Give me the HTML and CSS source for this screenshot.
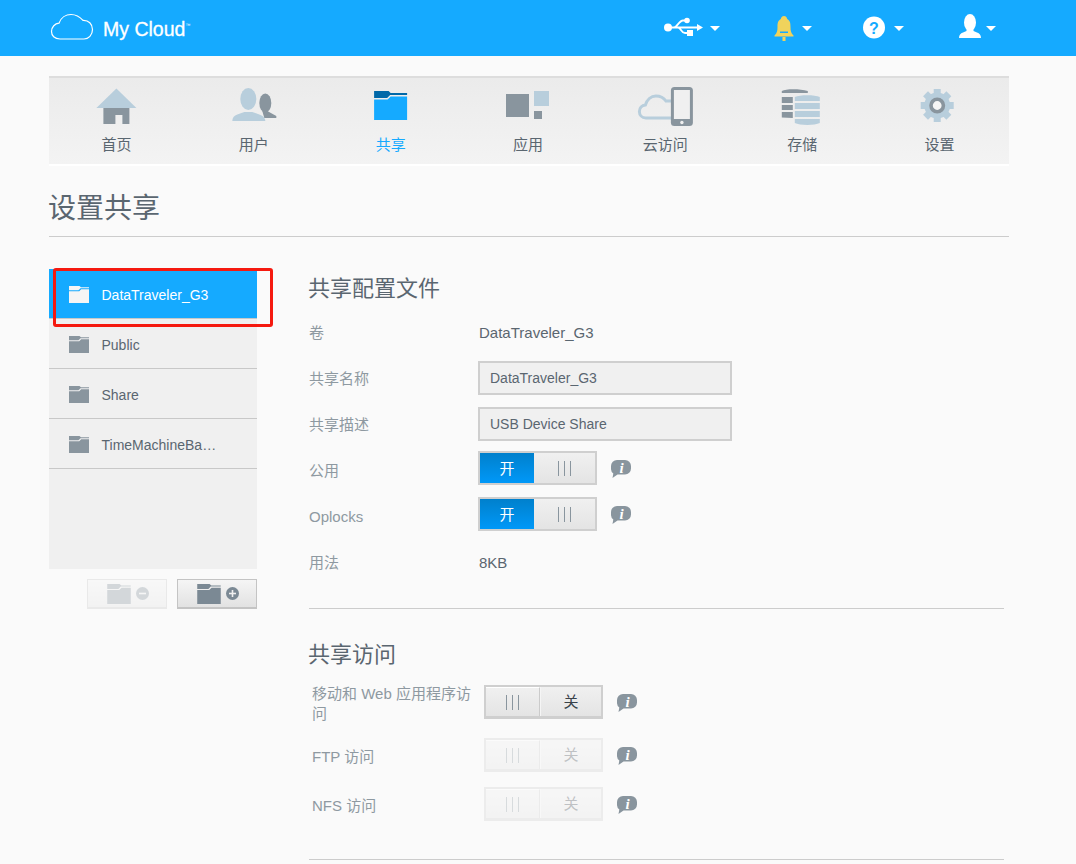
FILE: index.html
```html
<!DOCTYPE html>
<html lang="zh">
<head>
<meta charset="utf-8">
<title>My Cloud</title>
<link rel="stylesheet" href="styles.css">
</head>
<body>
<svg class="defs" width="0" height="0">
  <symbol id="folder" viewBox="0 0 20 17">
    <path d="M0 0h10.500l1.500 1.200h8v1h-8.500l-2 2H0z"/>
    <path d="M0 5.200h10.200l2-2H20V17H0z"/>
  </symbol>
  <symbol id="info" viewBox="0 0 20 18">
    <path d="M6 0h8a6 6 0 0 1 6 6v2.500a6 6 0 0 1-6 6H6.500L1.500 18l.8-4.500A6 6 0 0 1 0 8.500V6a6 6 0 0 1 6-6z"/>
  </symbol>
</svg>

<header class="topbar">
  <div class="logo">
    <svg class="logo-cloud" width="44" height="28" viewBox="50 13 44 28"><path d="M60 39C54.500 39 51.500 35.500 51.500 31.500 51.500 27 55 23.500 59 23.200 61 17.500 66 14.500 71 14.500 76.500 14.500 80.500 17.500 83 20.300 88.500 20 92.500 24 92.500 29.500 92.500 35 88.500 39 84 39Z"/></svg>
    <span class="logo-text">My Cloud<sup class="tm">™</sup></span>
  </div>
  <div class="top-actions">
    <div class="top-item">
      <svg width="50" height="28" viewBox="660 14 50 28" class="white">
        <circle cx="668" cy="27.500" r="4"/>
        <path class="usb-line" d="M668 27.500H699M674 27.500c3 0 5-7 9-7h2M678 27.500c3 0 3 5.500 7 5.500h2"/>
        <circle cx="687" cy="20.500" r="2.800"/>
        <rect x="687" y="30" width="6" height="6"/>
        <path d="M697 24l6 3.500-6 3.500z"/>
      </svg>
      <span class="caret"></span>
    </div>
    <div class="top-item">
      <svg width="32" height="28" viewBox="770 12 32 28" class="bell">
        <path d="M784 14c2 0 3 1.500 3.200 3 3 1.500 3.300 4.500 3.300 8 0 4 .5 6 3 8.500v1h-19v-1c2.500-2.500 3-4.500 3-8.500 0-3.500.3-6.500 3.300-8 .2-1.500 1.200-3 3.200-3z"/>
        <rect x="782.500" y="35" width="3" height="4"/>
        <rect x="780" y="29.500" width="8" height="1.500" class="bell-mark"/>
      </svg>
      <span class="caret"></span>
    </div>
    <div class="top-item">
      <svg width="34" height="28" viewBox="860 14 34 28" class="white">
        <circle cx="874" cy="27.500" r="11"/>
        <text x="874" y="33.500" class="help-mark">?</text>
      </svg>
      <span class="caret"></span>
    </div>
    <div class="top-item">
      <svg width="31" height="28" viewBox="955 14 31 28" class="white">
        <ellipse cx="970" cy="22.500" rx="6" ry="8.500"/>
        <path d="M959 38c0-3 1.500-4.500 4-5.500l3.500-1.500V27h7v4l3.500 1.500c2.500 1 4 2.500 4 5.500z"/>
      </svg>
      <span class="caret"></span>
    </div>
  </div>
</header>

<div class="page">
  <nav class="mainnav">
    <a class="nav-item">
      <svg width="60" height="44" viewBox="87.600 84 60 44">
        <path class="lt" d="M116 88.500l20 19.500H96z"/>
        <path class="dk" d="M103 108h26v16h-7v-9h-7v9h-12z"/>
      </svg>
      <span>首页</span>
    </a>
    <a class="nav-item">
      <svg width="60" height="44" viewBox="224.700 84 60 44">
        <ellipse class="dk" cx="265" cy="103" rx="6" ry="9.500"/>
        <path class="dk" d="M262 111h5l9 5v2h-12z"/>
        <ellipse class="lt" cx="248" cy="99" rx="8" ry="11"/>
        <path class="lt" d="M232 121c0-3.500 2-5.500 5-6.500l7-2.500h8l7 2.500c3 1 6 3 6 6.500z"/>
      </svg>
      <span>用户</span>
    </a>
    <a class="nav-item active">
      <svg width="60" height="44" viewBox="361.900 84 60 44">
        <path class="fd" d="M374 91h14.500l2 2H407v2h-17l-3 3h-13z"/>
        <path class="fb" d="M374 99.500h13.500l3-3H407V120h-33z"/>
      </svg>
      <span>共享</span>
    </a>
    <a class="nav-item">
      <svg width="60" height="44" viewBox="499 84 60 44">
        <rect class="dk" x="506" y="94" width="23" height="23"/>
        <rect class="lt" x="534" y="91" width="15" height="15"/>
        <rect class="dk" x="534" y="111" width="8" height="8"/>
      </svg>
      <span>应用</span>
    </a>
    <a class="nav-item">
      <svg width="60" height="44" viewBox="636.100 84 60 44">
        <path class="cloud-line" d="M672 118h-26c-4 0-6.500-3-6.500-6.500s2.500-6 6-6.500c1.500-5 5.500-9 10.500-9 4.500 0 8 2 10 5h6"/>
        <rect class="dk" x="671" y="87" width="22" height="39" rx="3.500"/>
        <rect class="screen" x="674" y="90" width="16" height="29"/>
        <circle class="screen" cx="682" cy="122.500" r="1.700"/>
      </svg>
      <span>云访问</span>
    </a>
    <a class="nav-item">
      <svg width="60" height="44" viewBox="773.200 84 60 44">
        <path class="dk" d="M782 91c4-2.500 18-2.500 26 0v2h-26zM782 97h11v6h-11zM782 105h11v5h-11zM782 112h11v6l-11-.500c0 0 0 0 0-5.500z"/>
        <path class="lt" d="M795 97c5-2.500 20-2.500 25 0v4h-25zM795 103h25v6h-25zM795 111h25v6h-25zM795 119h25v4c-5 2.500-20 2.500-25 0z"/>
      </svg>
      <span>存储</span>
    </a>
    <a class="nav-item">
      <svg width="60" height="44" viewBox="910.300 84 60 44">
        <g class="lt">
          <circle cx="937.500" cy="105.500" r="13"/>
          <rect x="934" y="89" width="7" height="33"/>
          <rect x="921" y="102" width="33" height="7"/>
          <rect x="934" y="89" width="7" height="33" transform="rotate(45 937.500 105.500)"/>
          <rect x="934" y="89" width="7" height="33" transform="rotate(-45 937.500 105.500)"/>
        </g>
        <circle class="gear-ring" cx="937.500" cy="105.500" r="6.200"/>
      </svg>
      <span>设置</span>
    </a>
  </nav>

  <h1 class="page-title">设置共享</h1>

  <div class="content">
    <aside class="sidebar">
      <ul class="share-list">
        <li class="share selected"><svg class="folder-ico" width="20" height="17"><use href="#folder"/></svg><span class="share-name">DataTraveler_G3</span></li>
        <li class="share"><svg class="folder-ico" width="20" height="17"><use href="#folder"/></svg><span class="share-name">Public</span></li>
        <li class="share"><svg class="folder-ico" width="20" height="17"><use href="#folder"/></svg><span class="share-name">Share</span></li>
        <li class="share"><svg class="folder-ico" width="20" height="17"><use href="#folder"/></svg><span class="share-name">TimeMachineBa…</span></li>
      </ul>
      <div class="highlight"></div>
      <div class="share-buttons">
        <button class="fbtn disabled" type="button">
          <svg width="24" height="20"><use href="#folder"/></svg>
          <span class="fbtn-badge">
            <svg width="13" height="13" viewBox="0 0 13 13"><circle cx="6.500" cy="6.500" r="6.500"/><rect class="badge-mark" x="3" y="5.700" width="7" height="1.600"/></svg>
          </span>
        </button>
        <button class="fbtn" type="button">
          <svg width="24" height="20"><use href="#folder"/></svg>
          <span class="fbtn-badge">
            <svg width="13" height="13" viewBox="0 0 13 13"><circle cx="6.500" cy="6.500" r="6.500"/><rect class="badge-mark" x="3" y="5.700" width="7" height="1.600"/><rect class="badge-mark" x="5.700" y="3" width="1.600" height="7"/></svg>
          </span>
        </button>
      </div>
    </aside>

    <main class="main">
      <h2 class="section-title">共享配置文件</h2>
      <div class="form">
        <div class="row"><label class="label">卷</label><span class="value">DataTraveler_G3</span></div>
        <div class="row"><label class="label">共享名称</label><input class="field" type="text" value="DataTraveler_G3" readonly></div>
        <div class="row"><label class="label">共享描述</label><input class="field" type="text" value="USB Device Share" readonly></div>
        <div class="row"><label class="label">公用</label>
          <div class="toggle toggle-raised"><span class="seg seg-on">开</span><span class="seg seg-grip"><i></i><i></i><i></i></span></div>
          <svg class="info" width="20" height="18"><use href="#info"/><text x="10.500" y="13" class="info-i">i</text></svg>
        </div>
        <div class="row"><label class="label">Oplocks</label>
          <div class="toggle toggle-raised"><span class="seg seg-on">开</span><span class="seg seg-grip"><i></i><i></i><i></i></span></div>
          <svg class="info" width="20" height="18"><use href="#info"/><text x="10.500" y="13" class="info-i">i</text></svg>
        </div>
        <div class="row"><label class="label">用法</label><span class="value">8KB</span></div>
      </div>
      <hr class="rule rule-one">
      <h2 class="section-title">共享访问</h2>
      <div class="access">
        <div class="row row-access row-first"><label class="label">移动和 Web 应用程序访问</label>
          <div class="toggle toggle-off"><span class="seg seg-grip seg-left"><i></i><i></i><i></i></span><span class="seg seg-off">关</span></div>
          <svg class="info" width="20" height="18"><use href="#info"/><text x="10.500" y="13" class="info-i">i</text></svg>
        </div>
        <div class="row row-access"><label class="label">FTP 访问</label>
          <div class="toggle toggle-off is-disabled"><span class="seg seg-grip seg-left"><i></i><i></i><i></i></span><span class="seg seg-off">关</span></div>
          <svg class="info" width="20" height="18"><use href="#info"/><text x="10.500" y="13" class="info-i">i</text></svg>
        </div>
        <div class="row row-access"><label class="label">NFS 访问</label>
          <div class="toggle toggle-off is-disabled"><span class="seg seg-grip seg-left"><i></i><i></i><i></i></span><span class="seg seg-off">关</span></div>
          <svg class="info" width="20" height="18"><use href="#info"/><text x="10.500" y="13" class="info-i">i</text></svg>
        </div>
      </div>
      <hr class="rule rule-two">
    </main>
  </div>
</div>
</body>
</html>
```

FILE: styles.css
```css
* { box-sizing: border-box; }
html, body { margin: 0; padding: 0; height: 864px; overflow: hidden; }
body {
  background: #fafafa;
  font-family: "Liberation Sans", "Noto Sans CJK SC", sans-serif;
  font-size: 14px;
  color: #5a6670;
}
.defs { position: absolute; }

/* top bar */
.topbar {
  height: 56px;
  background: #15aaff;
  display: flex;
  align-items: center;
  padding: 0 80px 0 50px;
  color: #fff;
}
.logo { display: flex; align-items: center; }
.logo-cloud { fill: none; stroke: #fff; stroke-width: 1.200; margin-top: -2px; }
.logo-text { margin-left: 9px; font-size: 19.500px; line-height: 28px; -webkit-text-stroke: 0.3px #fff; position: relative; top: 1px; }
.tm { font-size: 5px; -webkit-text-stroke: 0; vertical-align: 9px; line-height: 0; }
.top-actions { margin-left: auto; display: flex; }
.top-item { width: 92px; display: flex; justify-content: flex-end; align-items: center; }
.white { fill: #fff; }
.usb-line { fill: none; stroke: #fff; stroke-width: 1.800; }
.bell { fill: #f0d35c; }
.bell-mark { fill: #15aaff; }
.help-mark { fill: #15aaff; font: bold 16px "Liberation Sans", sans-serif; text-anchor: middle; }
.caret {
  width: 0; height: 0;
  border-left: 5px solid transparent;
  border-right: 5px solid transparent;
  border-top: 5px solid #fff;
}

/* main navigation */
.page { width: 960px; margin: 20px 0 0 49px; }
.mainnav {
  display: grid;
  grid-template-columns: repeat(7, 1fr);
  height: 90px;
  border-top: 2px solid #ddd;
  border-bottom: 2px solid #fff;
  background: linear-gradient(#ebebeb, #f3f3f3);
  font-size: 15px;
}
.nav-item {
  display: flex;
  flex-direction: column;
  align-items: center;
  padding-top: 6px;
  color: #5a6670;
}
.nav-item span { margin: 7px 2px 0 0; line-height: 20px; }
.nav-item.active { color: #15aaff; }
.lt { fill: #b8cedc; }
.dk { fill: #89959e; }
.fd { fill: #0068a8; }
.fb { fill: #15aaff; }
.screen { fill: #f0f0f0; }
.cloud-line { fill: none; stroke: #b8cedc; stroke-width: 3; }
.gear-ring { fill: #f5f5f5; stroke: #89959e; stroke-width: 3.600; }

.page-title {
  margin: 0;
  padding: 23px 0 7px;
  font-size: 28px;
  font-weight: 400;
  line-height: 40px;
  text-indent: -1px;
  color: #5a6670;
  border-bottom: 1px solid #ccc;
}

.content { display: flex; margin-top: 32px; }

/* shares sidebar */
.sidebar { width: 208px; position: relative; }
.share-list {
  list-style: none;
  margin: 0;
  padding: 0;
  height: 300px;
  background: #f0f0f0;
}
.share {
  height: 50px;
  display: flex;
  align-items: center;
  padding: 2px 0 0 20px;
  border-bottom: 1px solid #c8c8c8;
  color: #5a6670;
}
.share.selected { background: #15aaff; color: #fff; }
.folder-ico { fill: #89959e; flex: none; }
.selected .folder-ico { fill: #f5f5f5; }
.share-name { margin-left: 12.500px; white-space: nowrap; }
.highlight {
  position: absolute;
  left: 4px;
  top: -1px;
  width: 220px;
  height: 59px;
  border: 3px solid #f5190f;
  border-radius: 3px;
}
.share-buttons { display: flex; justify-content: flex-end; gap: 10px; margin-top: 10px; }
.fbtn {
  width: 80px;
  height: 30px;
  padding: 0 0 0 1px;
  display: flex;
  align-items: center;
  justify-content: center;
  gap: 5px;
  border: 1px solid #c4c4c4;
  border-bottom-width: 2px;
  background: linear-gradient(#f5f5f5, #e2e2e2);
  fill: #7b8994;
}
.fbtn-badge { display: flex; margin-top: -1px; }
.badge-mark { fill: #f0f0f0; }
.fbtn.disabled { opacity: 0.3; }

/* form */
.main { width: 695px; margin-left: 52px; padding-top: 5px; font-size: 15px; }
.section-title {
  margin: 0;
  font-size: 22px;
  font-weight: 400;
  line-height: 30px;
  text-indent: -1px;
  color: #5a6670;
}
.form { margin-top: 5px; }
.row { display: flex; align-items: center; height: 46px; }
.label { width: 169px; flex: none; padding-top: 2px; color: #8e99a1; line-height: 20px; }
.value { margin-left: 1px; color: #5a6670; }
.field {
  width: 254px;
  height: 34px;
  padding: 0 0 0 10px;
  border: 2px solid #cfcfcf;
  background: #f0f0f0;
  color: #5a6670;
  font-family: inherit;
  font-size: 14px;
  outline: none;
}
.toggle {
  display: flex;
  width: 119px;
  height: 34px;
  border: 2px solid #cfcfcf;
}
.toggle-raised { margin-top: -4px; }
.seg { display: flex; align-items: center; justify-content: center; height: 100%; }
.seg-on { width: 54px; padding-bottom: 2px; background: linear-gradient(#0080cc, #0098f8); color: #fff; }
.seg-grip { flex: 1; gap: 5px; background: linear-gradient(#f0f0f0, #e4e4e4); }
.seg-grip i { display: block; width: 1px; height: 15px; background: #89959e; }
.info { fill: #89959e; margin-left: 14px; flex: none; position: relative; top: -1px; }
.info-i { fill: #fff; font: italic bold 15px "Liberation Serif", serif; text-anchor: middle; }

/* access section */
.rule { border: 0; border-top: 1px solid #ccc; margin: 0; }
.rule-one { margin-top: 23px; margin-bottom: 31px; }
.access { margin-top: 9px; padding-left: 3px; display: flex; flex-direction: column; gap: 3px; }
.row-first { margin-bottom: 4px; }
.row-access .label { width: 172px; padding-right: 8px; padding-top: 4px; }
.row-access .info { top: 1px; }
.toggle-off { border-bottom-width: 3px; }
.seg-left { flex: none; width: 54px; border-right: 1px solid #cbcbcb; border-top: 1px solid #fff; }
.seg-off { flex: 1; background: linear-gradient(#f0f0f0, #e4e4e4); border-left: 1px solid #f5f5f5; color: #39424a; padding-bottom: 2px; }
.is-disabled { opacity: 0.3; }
.rule-two { margin-top: 32px; }
```
